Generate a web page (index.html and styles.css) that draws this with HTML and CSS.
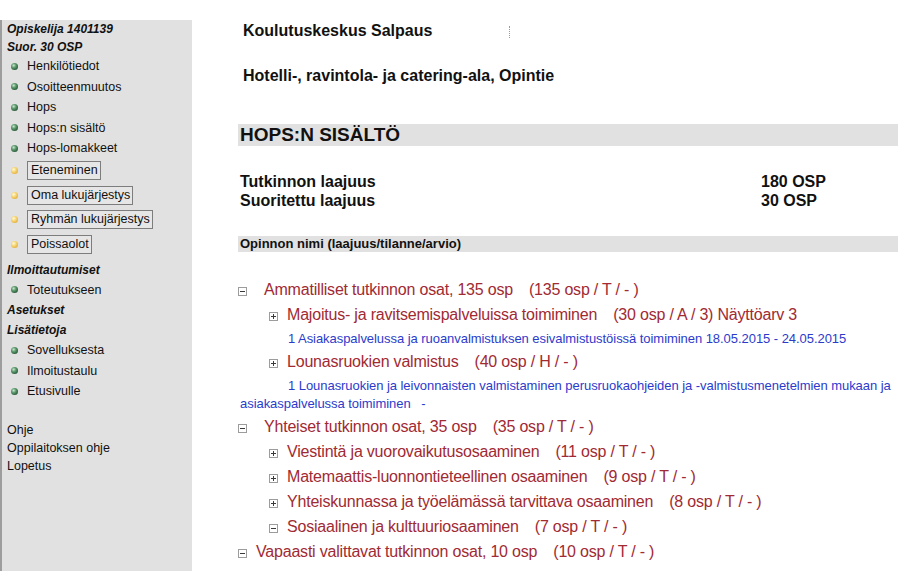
FILE: index.html
```html
<!DOCTYPE html>
<html lang="fi">
<head>
<meta charset="utf-8">
<title>Hops:n sisältö</title>
<link rel="stylesheet" href="styles.css">
</head>
<body>
<div class="page">
  <nav class="sidebar">
    <div class="sb-head">Opiskelija 1401139</div>
    <div class="sb-head">Suor. 30 OSP</div>
    <ul class="sb-list">
      <li class="sb-item"><span class="dot green"></span>Henkilötiedot</li>
      <li class="sb-item"><span class="dot green"></span>Osoitteenmuutos</li>
      <li class="sb-item"><span class="dot green"></span>Hops</li>
      <li class="sb-item"><span class="dot green"></span>Hops:n sisältö</li>
      <li class="sb-item"><span class="dot green"></span>Hops-lomakkeet</li>
      <li class="sb-item btn"><span class="dot yellow"></span><span class="box">Eteneminen</span></li>
      <li class="sb-item btn"><span class="dot yellow"></span><span class="box">Oma lukujärjestys</span></li>
      <li class="sb-item btn"><span class="dot yellow"></span><span class="box">Ryhmän lukujärjestys</span></li>
      <li class="sb-item btn"><span class="dot yellow"></span><span class="box">Poissaolot</span></li>
    </ul>
    <div class="sb-head sb-head-gap">Ilmoittautumiset</div>
    <ul class="sb-list">
      <li class="sb-item"><span class="dot green"></span>Toteutukseen</li>
    </ul>
    <div class="sb-head sb-head-20">Asetukset</div>
    <div class="sb-head sb-head-20">Lisätietoja</div>
    <ul class="sb-list">
      <li class="sb-item"><span class="dot green"></span>Sovelluksesta</li>
      <li class="sb-item"><span class="dot green"></span>Ilmoitustaulu</li>
      <li class="sb-item"><span class="dot green"></span>Etusivulle</li>
    </ul>
    <ul class="sb-links">
      <li>Ohje</li>
      <li>Oppilaitoksen ohje</li>
      <li>Lopetus</li>
    </ul>
  </nav>

  <main class="main">
    <div class="title title-first">Koulutuskeskus Salpaus<span class="dotted"></span></div>
    <div class="title title-second">Hotelli-, ravintola- ja catering-ala, Opintie</div>

    <h1 class="section-head">HOPS:N SISÄLTÖ</h1>

    <div class="totals">
      <span>Tutkinnon laajuus</span><span>180 OSP</span>
      <span>Suoritettu laajuus</span><span>30 OSP</span>
    </div>

    <div class="list-head">Opinnon nimi (laajuus/tilanne/arvio)</div>

    <div class="tree">
      <div class="row l1"><svg class="tog" width="9" height="9" viewBox="0 0 9 9"><rect x="0.5" y="0.5" width="8" height="8" fill="#fff" stroke="#9c9c9c"/><path d="M2 4.5h5" stroke="#3a3a3a"/></svg><span class="name">Ammatilliset tutkinnon osat, 135 osp</span><span class="meta">(135 osp / T / - )</span></div>
      <div class="row l2"><svg class="tog" width="9" height="9" viewBox="0 0 9 9"><rect x="0.5" y="0.5" width="8" height="8" fill="#fff" stroke="#9c9c9c"/><path d="M2 4.5h5M4.5 2v5" stroke="#3a3a3a"/></svg><span class="name">Majoitus- ja ravitsemispalveluissa toimiminen</span><span class="meta">(30 osp / A / 3) Näyttöarv 3</span></div>
      <div class="impl">1 Asiakaspalvelussa ja ruoanvalmistuksen esivalmistustöissä toimiminen 18.05.2015 - 24.05.2015</div>
      <div class="row l2"><svg class="tog" width="9" height="9" viewBox="0 0 9 9"><rect x="0.5" y="0.5" width="8" height="8" fill="#fff" stroke="#9c9c9c"/><path d="M2 4.5h5M4.5 2v5" stroke="#3a3a3a"/></svg><span class="name">Lounasruokien valmistus</span><span class="meta">(40 osp / H / - )</span></div>
      <div class="impl">1 Lounasruokien ja leivonnaisten valmistaminen perusruokaohjeiden ja -valmistusmenetelmien mukaan ja asiakaspalvelussa toimiminen &nbsp; -</div>
      <div class="row l1"><svg class="tog" width="9" height="9" viewBox="0 0 9 9"><rect x="0.5" y="0.5" width="8" height="8" fill="#fff" stroke="#9c9c9c"/><path d="M2 4.5h5" stroke="#3a3a3a"/></svg><span class="name">Yhteiset tutkinnon osat, 35 osp</span><span class="meta">(35 osp / T / - )</span></div>
      <div class="row l2"><svg class="tog" width="9" height="9" viewBox="0 0 9 9"><rect x="0.5" y="0.5" width="8" height="8" fill="#fff" stroke="#9c9c9c"/><path d="M2 4.5h5M4.5 2v5" stroke="#3a3a3a"/></svg><span class="name">Viestintä ja vuorovaikutusosaaminen</span><span class="meta">(11 osp / T / - )</span></div>
      <div class="row l2"><svg class="tog" width="9" height="9" viewBox="0 0 9 9"><rect x="0.5" y="0.5" width="8" height="8" fill="#fff" stroke="#9c9c9c"/><path d="M2 4.5h5M4.5 2v5" stroke="#3a3a3a"/></svg><span class="name">Matemaattis-luonnontieteellinen osaaminen</span><span class="meta">(9 osp / T / - )</span></div>
      <div class="row l2"><svg class="tog" width="9" height="9" viewBox="0 0 9 9"><rect x="0.5" y="0.5" width="8" height="8" fill="#fff" stroke="#9c9c9c"/><path d="M2 4.5h5M4.5 2v5" stroke="#3a3a3a"/></svg><span class="name">Yhteiskunnassa ja työelämässä tarvittava osaaminen</span><span class="meta">(8 osp / T / - )</span></div>
      <div class="row l2"><svg class="tog" width="9" height="9" viewBox="0 0 9 9"><rect x="0.5" y="0.5" width="8" height="8" fill="#fff" stroke="#9c9c9c"/><path d="M2 4.5h5" stroke="#3a3a3a"/></svg><span class="name">Sosiaalinen ja kulttuuriosaaminen</span><span class="meta">(7 osp / T / - )</span></div>
      <div class="row l1 tight"><svg class="tog" width="9" height="9" viewBox="0 0 9 9"><rect x="0.5" y="0.5" width="8" height="8" fill="#fff" stroke="#9c9c9c"/><path d="M2 4.5h5" stroke="#3a3a3a"/></svg><span class="name">Vapaasti valittavat tutkinnon osat, 10 osp</span><span class="meta">(10 osp / T / - )</span></div>
    </div>
  </main>
</div>
</body>
</html>
```

FILE: styles.css
```css
html, body {
  margin: 0;
  padding: 0;
  background: #ffffff;
  overflow: hidden;
}

body {
  font-family: "Liberation Sans", Arial, sans-serif;
  color: #111111;
}

.page {
  display: flex;
  align-items: flex-start;
  min-height: 100vh;
}

/* ---------- sidebar ---------- */
.sidebar {
  flex: 0 0 190px;
  margin-top: 20px;
  min-height: calc(100vh - 20px);
  background: #e1e1e1;
  border-left: 2px solid #9d9d9d;
  font-size: 12.5px;
  color: #111111;
}

.sb-head {
  font-size: 12px;
  font-weight: bold;
  font-style: italic;
  line-height: 18px;
  padding-left: 5px;
}

.sb-head-gap {
  line-height: 20px;
  margin-top: 3px;
}

.sb-head-20 {
  line-height: 20px;
}

.sb-list {
  list-style: none;
  margin: 0;
  padding: 0;
}

.sb-item {
  display: flex;
  align-items: center;
  height: 20.5px;
  white-space: nowrap;
}

.sb-item.btn {
  height: 24.5px;
}

.dot {
  flex: 0 0 7px;
  width: 7px;
  height: 7px;
  border-radius: 50%;
  margin: 0 9px 0 9px;
}

.dot.green {
  background: radial-gradient(circle at 38% 35%, #c9e6cf 0, #5d9a6d 35%, #2a5a3a 75%, #1d3d28 100%);
}

.dot.yellow {
  background: radial-gradient(circle at 38% 35%, #fffbe0 0, #f6d470 40%, #e2ad3e 80%, #d19a2c 100%);
}

.box {
  display: inline-block;
  border: 1px solid #7d7d7d;
  background: #e6e6e6;
  padding: 0 2px 0 3px;
  line-height: 17px;
}

.sb-links {
  list-style: none;
  margin: 19px 0 0 0;
  padding: 0 0 0 5px;
}

.sb-links li {
  line-height: 18px;
}

/* ---------- main ---------- */
.main {
  flex: 1 1 auto;
  padding-left: 46px;
  min-width: 0;
}

.title {
  font-size: 16px;
  font-weight: bold;
  line-height: 20px;
  padding-left: 5px;
  white-space: nowrap;
}

.title-first {
  margin-top: 21px;
}

.title-second {
  margin-top: 25px;
}

.dotted {
  display: inline-block;
  width: 0;
  height: 12px;
  margin-left: 77px;
  border-left: 1px dotted #9a9a9a;
  vertical-align: middle;
}

.section-head {
  margin: 38px 0 0 0;
  height: 22px;
  line-height: 22px;
  background: #e1e1e1;
  font-size: 19px;
  font-weight: bold;
  padding-left: 2px;
}

.totals {
  display: grid;
  grid-template-columns: 521px auto;
  margin-top: 26px;
  padding-left: 2px;
  font-size: 16px;
  font-weight: bold;
  line-height: 19px;
}

.list-head {
  margin-top: 26px;
  height: 16px;
  line-height: 16px;
  background: #e1e1e1;
  font-size: 13px;
  font-weight: bold;
  padding-left: 2px;
}

.tree {
  margin-top: 24.5px;
}

.row {
  height: 25px;
  line-height: 25px;
  font-size: 16px;
  color: #a12a33;
  white-space: nowrap;
  letter-spacing: -0.2px;
}

.row.l2 {
  padding-left: 31px;
}

.tog {
  display: inline-block;
  vertical-align: -1px;
  margin-right: 17px;
}

.row.l2 .tog {
  margin-right: 9px;
}

.row.tight .tog {
  margin-right: 9px;
}

.meta {
  margin-left: 16px;
}

.impl {
  font-size: 13px;
  line-height: 18px;
  color: #2b3bcc;
  padding: 3px 0 1px 2px;
  text-indent: 48px;
  letter-spacing: -0.05px;
}
```
